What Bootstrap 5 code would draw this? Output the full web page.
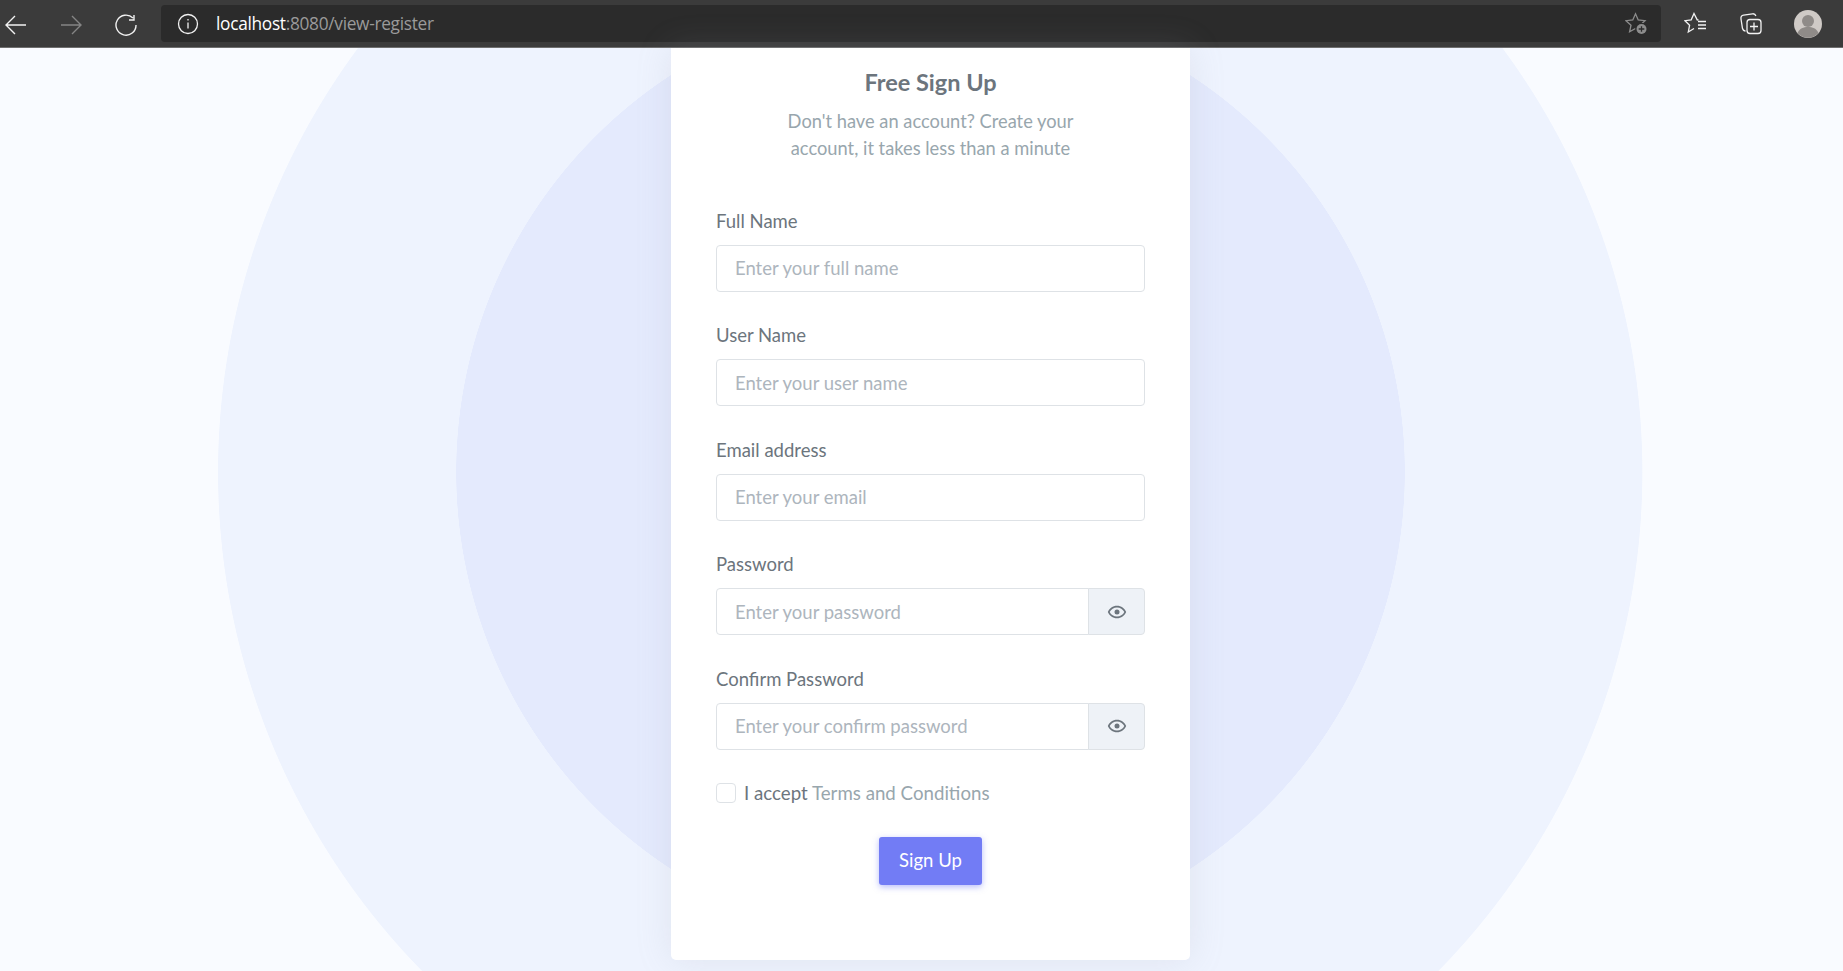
<!DOCTYPE html>
<html lang="en">
<head>
  <meta charset="UTF-8" />
  <meta name="viewport" content="width=device-width, initial-scale=1.0"/>
  <title>Free Sign Up</title>
  <link href="https://cdn.jsdelivr.net/npm/bootstrap@5.3.0/dist/css/bootstrap.min.css" rel="stylesheet" />
  <style>
    html, body { height: 100%; }
    body { font-family: "Lato", "Open Sans", sans-serif; overflow: hidden; background: #f9fbff; }
    .chrome-bar { height: 48px; background: #3b3b3b; border-bottom: 1px solid #6e6e6e; padding-left: 5px; }
    .chrome-btn { width: 55px; flex: none; }
    .url-box { width: 1500px; height: 37px; background: #2b2b2b; border-radius: 4px; margin-left: -9px; padding: 0 12px 0 16px; flex: none; }
    .url-text { font: 17.3px "Open Sans", sans-serif; margin-left: 17px; color: #9a9a9a; letter-spacing: -.3px; }
    .url-text b { font-weight: 400; color: #fff; }
    .chrome-tools { gap: 31px; margin-left: 23px; }
    .page-area {
      height: 923px;
      padding-left: 18px;
      background:
        radial-gradient(circle 474.5px at 930.5px 424px, #e4eafd 99.9%, transparent 100%),
        radial-gradient(circle 712.5px at 930.2px 424px, #eef3fe 99.9%, transparent 100%),
        #f9fbff;
    }
    .signup-card { width: 519px; height: 912px; padding: 0 45px; border: 0; border-radius: 0 0 5px 5px; box-shadow: 0 0 35px rgba(154, 161, 171, .18); }
    .signup-title { font-size: 23.5px; font-weight: 700; color: #6c757d; margin: 18px 0 0; line-height: 32px; }
    .signup-sub { font-size: 18.3px; line-height: 27.5px; color: #98a6ad; margin: 9.5px 50px 0; }
    .signup-form { margin-top: 45px; }
    .field-label { font-size: 18.5px; color: #6c757d; margin-bottom: 11px; line-height: 26px; display: block; }
    .field-gap { margin-bottom: 30.6px; }
    .form-control.field-input { height: 47px; font-size: 18.5px; color: #6c757d; border: 1px solid #dee2e6; border-radius: 4px; padding: 0 18px; }
    .field-input::placeholder { color: #adb5bd; }
    .eye-addon { width: 57px; background: #eef2f7; border: 1px solid #dee2e6; border-radius: 0 4px 4px 0; margin-left: -1px; }
    .terms-row { margin-top: 29.5px; }
    .form-check-input.terms-box { width: 20px; height: 20px; margin: 0; border: 1px solid #dee2e6; border-radius: 4px; }
    .terms-text { font-size: 18.7px; color: #6c757d; margin-left: 8px; }
    .terms-text a { color: #98a6ad; text-decoration: none; }
    .submit-row { margin-top: 29.5px; }
    .btn.signup-btn { width: 103px; height: 48px; padding: 0; background: #727cf5; color: #fff; border: 0; border-radius: 3px; font-size: 18.5px; box-shadow: 0 2px 6px 0 rgba(114, 124, 245, .5); }
  </style>
</head>
<body>
  <!-- browser toolbar -->
  <div class="chrome-bar d-flex align-items-center">
    <div class="chrome-btn">
      <svg width="22" height="22" viewBox="0 0 22 22" fill="none" stroke="#f2f2f2" stroke-width="1.4"><path d="M1 11h20M10 2l-9 9 9 9"/></svg>
    </div>
    <div class="chrome-btn">
      <svg width="22" height="22" viewBox="0 0 22 22" fill="none" stroke="#858585" stroke-width="1.4"><path d="M1 11h20M12 2l9 9-9 9"/></svg>
    </div>
    <div class="chrome-btn">
      <svg width="22" height="22" viewBox="0 0 22 22" fill="none" stroke="#f2f2f2" stroke-width="1.4"><path d="M18 4a10 10 0 1 0 3 7M19 1v5h-5"/></svg>
    </div>
    <div class="url-box d-flex align-items-center">
      <svg width="22" height="22" viewBox="0 0 22 22" fill="none" stroke="#f2f2f2" stroke-width="1.3"><circle cx="11" cy="11" r="9.5"/><path d="M11 9.5v6M11 6v1.6"/></svg>
      <span class="url-text"><b>localhost</b>:8080/view-register</span>
      <svg class="ms-auto" width="24" height="24" viewBox="0 0 24 24" fill="none" stroke="#8c8c8c" stroke-width="1.3"><path d="M10.5 1.800l2.700 6.200 6.800.7-5 4.500 1.400 6.600-5.900-3.400-5.900 3.400 1.400-6.600-5-4.500 6.800-.7z"/><circle cx="16.5" cy="17" r="6.300" fill="#2b2b2b" stroke="none"/><circle cx="16.5" cy="17" r="5" fill="#8c8c8c" stroke="none"/><path d="M13.7 17h5.600M16.5 14.200v5.600" stroke="#2b2b2b"/></svg>
    </div>
    <div class="chrome-tools d-flex align-items-center">
      <svg width="24" height="24" viewBox="0 0 24 24" fill="none" stroke="#f2f2f2" stroke-width="1.3"><path d="M14.5 8l-1.300-.2L10 1.500 7.200 7.800 1 8.700l4.600 4.500-1.300 6.800 5.700-3.500"/><path d="M14 9.500h8M14 13h8M14 16.500h8"/></svg>
      <svg width="24" height="24" viewBox="0 0 24 24" fill="none" stroke="#f2f2f2" stroke-width="1.3"><path d="M6.500 19c-1.500 0-2.500-1-3-2.500L2 7c-.3-2 .8-3.500 2.600-3.800l8.900-1.400c1.600-.2 2.900.6 3.400 2.200"/><rect x="8" y="7.500" width="14" height="14" rx="3"/><path d="M15 10.500v8M11 14.500h8"/></svg>
      <svg width="28" height="28" viewBox="0 0 28 28"><circle cx="14" cy="14" r="14" fill="#cfcac6"/><circle cx="14" cy="11" r="6" fill="#8f8b88"/><path d="M3.500 23c2-4.500 6-6 10.500-6s8.500 1.500 10.500 6a14 14 0 0 1-21 0z" fill="#8f8b88"/></svg>
    </div>
  </div>

  <div class="page-area d-flex justify-content-center">
    <div class="card signup-card bg-white">
      <div class="text-center">
        <h4 class="signup-title">Free Sign Up</h4>
        <p class="signup-sub mb-0">Don't have an account? Create your account, it takes less than a minute</p>
      </div>
      <form class="signup-form">
        <div class="field-gap">
          <label class="field-label">Full Name</label>
          <input class="form-control field-input" type="text" placeholder="Enter your full name">
        </div>
        <div class="field-gap">
          <label class="field-label">User Name</label>
          <input class="form-control field-input" type="text" placeholder="Enter your user name">
        </div>
        <div class="field-gap">
          <label class="field-label">Email address</label>
          <input class="form-control field-input" type="email" placeholder="Enter your email">
        </div>
        <div class="field-gap">
          <label class="field-label">Password</label>
          <div class="d-flex">
            <input class="form-control field-input rounded-end-0" type="password" placeholder="Enter your password">
            <div class="eye-addon d-flex align-items-center justify-content-center flex-shrink-0">
              <svg width="20" height="20" viewBox="0 0 24 24" fill="#6c757d"><path d="M12 4.500C7 4.500 2.700 7.600 1 12c1.700 4.400 6 7.500 11 7.500s9.300-3.100 11-7.500c-1.700-4.400-6-7.500-11-7.500zm0 13c-3.800 0-7.100-2.200-8.800-5.500C4.900 8.700 8.200 6.500 12 6.500s7.100 2.200 8.800 5.500c-1.700 3.300-5 5.500-8.800 5.500z"/><circle cx="12" cy="12" r="3"/></svg>
            </div>
          </div>
        </div>
        <div>
          <label class="field-label">Confirm Password</label>
          <div class="d-flex">
            <input class="form-control field-input rounded-end-0" type="password" placeholder="Enter your confirm password">
            <div class="eye-addon d-flex align-items-center justify-content-center flex-shrink-0">
              <svg width="20" height="20" viewBox="0 0 24 24" fill="#6c757d"><path d="M12 4.500C7 4.500 2.700 7.600 1 12c1.700 4.400 6 7.500 11 7.500s9.300-3.100 11-7.500c-1.700-4.400-6-7.500-11-7.500zm0 13c-3.800 0-7.100-2.200-8.800-5.500C4.900 8.700 8.200 6.500 12 6.500s7.100 2.200 8.800 5.500c-1.700 3.300-5 5.500-8.800 5.500z"/><circle cx="12" cy="12" r="3"/></svg>
            </div>
          </div>
        </div>
        <div class="terms-row d-flex align-items-center">
          <input class="form-check-input terms-box" type="checkbox">
          <span class="terms-text">I accept <a href="#">Terms and Conditions</a></span>
        </div>
        <div class="submit-row text-center">
          <button class="btn signup-btn" type="button">Sign Up</button>
        </div>
      </form>
    </div>
  </div>
  <script src="https://cdn.jsdelivr.net/npm/bootstrap@5.3.0/dist/js/bootstrap.bundle.min.js" defer></script>
</body>
</html>
